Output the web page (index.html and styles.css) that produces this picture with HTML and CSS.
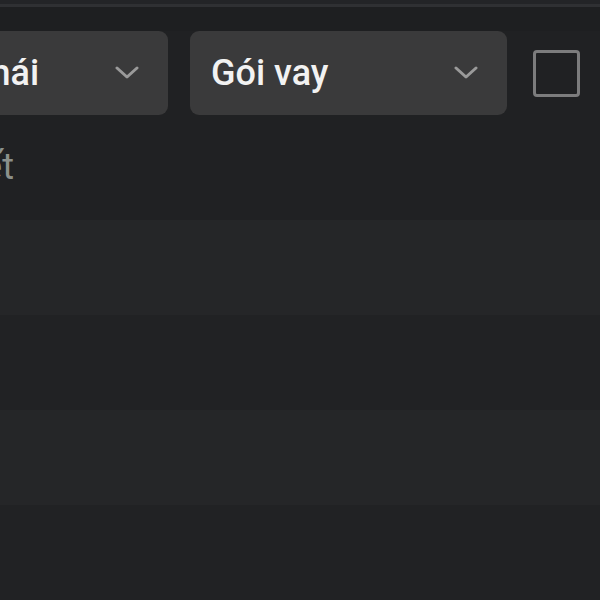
FILE: index.html
```html
<!DOCTYPE html>
<html lang="vi">
<head>
<meta charset="utf-8">
<link rel="stylesheet" href="styles.css">
</head>
<body>
<div class="topbar"></div>
<div class="filters">
  <div class="select">
    <span class="label">Trạng thái</span>
    <svg class="chev" viewBox="0 0 24 14" width="24" height="14"><path d="M2 2 L12 11 L22 2" fill="none" stroke="#9a9a9a" stroke-width="3" stroke-linecap="round" stroke-linejoin="round"/></svg>
  </div>
  <div class="select">
    <span class="label">Gói vay</span>
    <svg class="chev" viewBox="0 0 24 14" width="24" height="14"><path d="M2 2 L12 11 L22 2" fill="none" stroke="#9a9a9a" stroke-width="3" stroke-linecap="round" stroke-linejoin="round"/></svg>
  </div>
  <div class="checkbox"></div>
</div>
<div class="hint"><span>Xem chi tiết</span></div>
<div class="rows">
  <div class="row alt"></div>
  <div class="row"></div>
  <div class="row alt"></div>
  <div class="row"></div>
</div>
</body>
</html>
```

FILE: styles.css
```css
html, body {
  margin: 0;
  padding: 0;
  background: #202123;
  width: 600px;
  height: 600px;
  overflow: hidden;
  font-family: Roboto, "Noto Sans", "Liberation Sans", sans-serif;
}
.topbar {
  height: 31px;
  box-sizing: border-box;
  border-top: 4px solid #232427;
  background: #1e1f21;
  box-shadow: inset 0 3px 0 #2f3033;
}
.filters {
  display: flex;
  align-items: center;
  gap: 22px;
  margin-left: -149px;
  height: 84px;
}
.select {
  flex: 0 0 317px;
  height: 84px;
  box-sizing: border-box;
  background: #3a3a3b;
  border-radius: 9px;
  display: flex;
  align-items: center;
  justify-content: space-between;
  padding: 0 29px 0 21px;
}
.select:first-child {
  padding-left: 26px;
}
.label {
  color: #f2f2f2;
  font-size: 36px;
  font-weight: 500;
}
.chev {
  display: block;
}
.checkbox {
  flex: 0 0 47px;
  height: 47px;
  box-sizing: border-box;
  border: 3px solid #7c7c7d;
  border-radius: 4px;
  margin-left: 4px;
}
.hint {
  height: 105px;
  margin-left: -300px;
  width: 314px;
  display: flex;
  justify-content: flex-end;
  box-sizing: border-box;
  padding-top: 32px;
  color: #8b908b;
  font-size: 36px;
  line-height: 40px;
  white-space: nowrap;
}
.rows {
  display: flex;
  flex-direction: column;
}
.row {
  height: 95px;
  background: #212224;
}
.row.alt {
  background: #252628;
}
```
